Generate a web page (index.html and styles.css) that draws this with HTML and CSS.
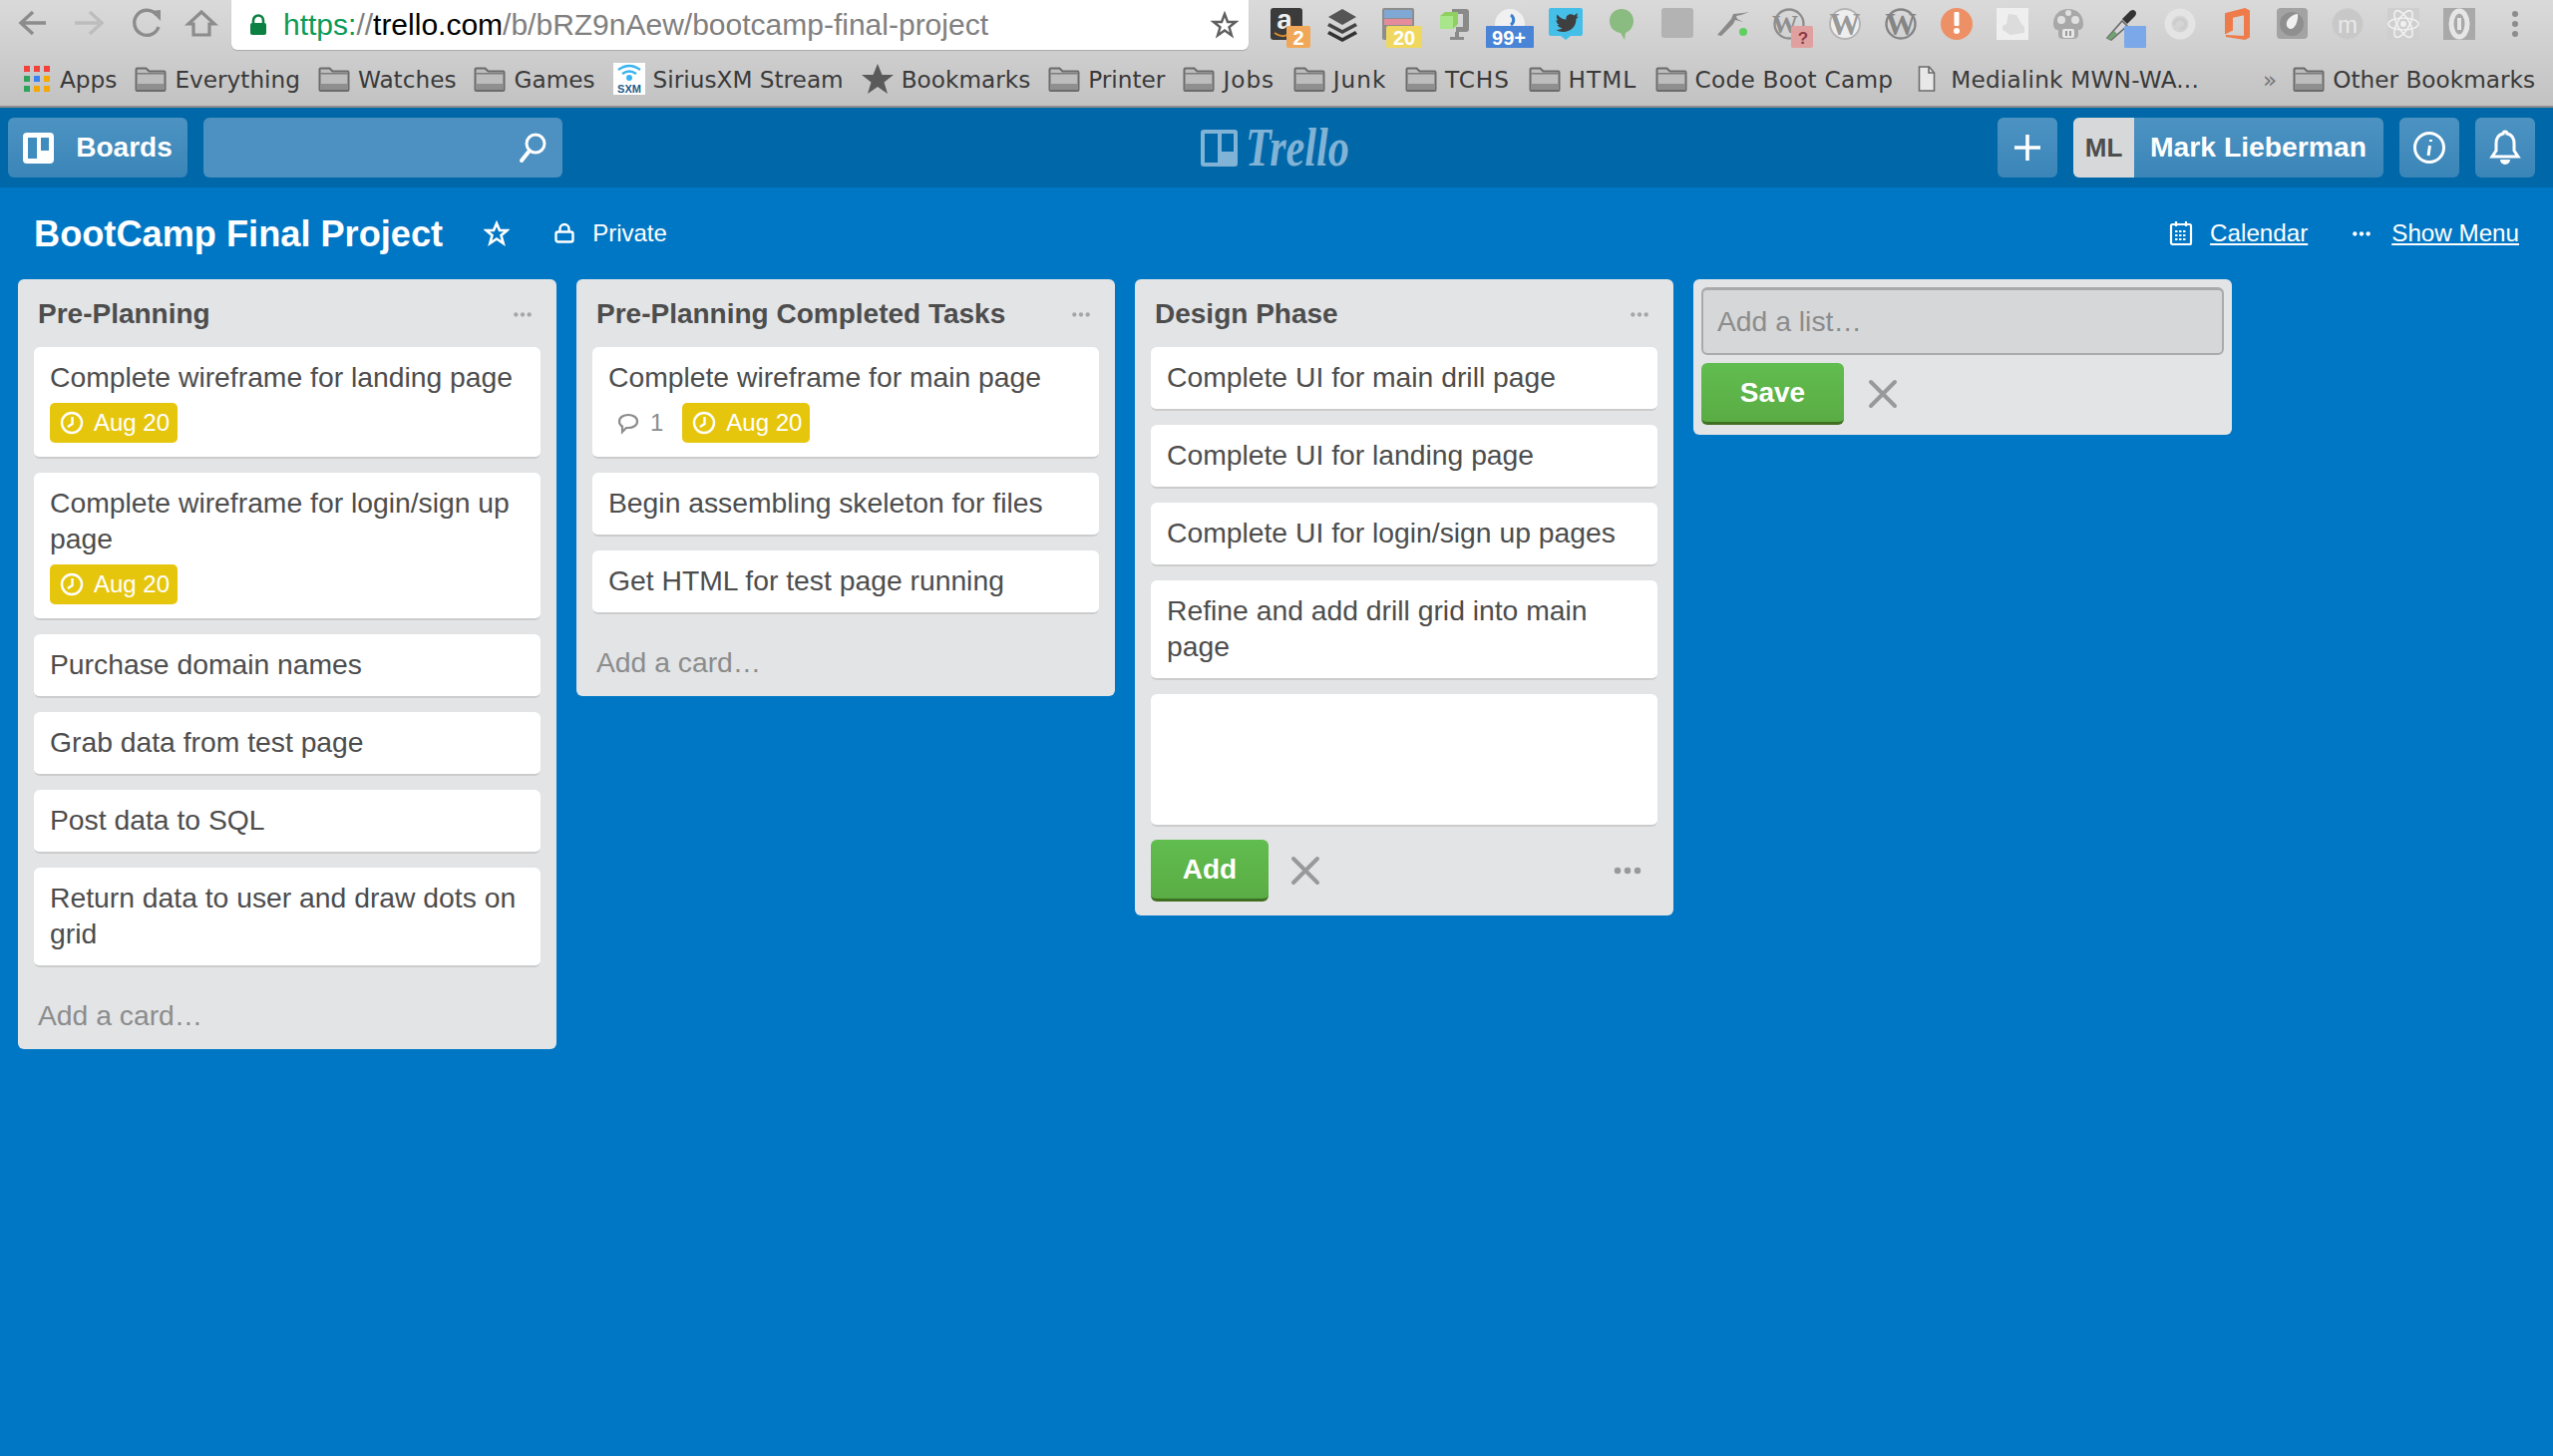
FILE: index.html
```html
<!DOCTYPE html>
<html>
 <head>
  <title>BootCamp Final Project on Trello</title>
  <link rel="stylesheet" href="styles.css">
 </head>
 <body>
  <svg class="defs" width="0" height="0">
   <symbol id="folder" viewBox="0 0 32 25">
    <path d="M1.5 23V2.5q0-1 1-1h9l3 3h15q1 0 1 1V23q0 1-1 1h-27q-1 0-1-1z" fill="#bdbdbd" stroke="#6b6b6b" stroke-width="2"/>
    <rect x="2.5" y="17" width="27" height="6" fill="#8f8f8f"/>
    <rect x="2.5" y="6" width="27" height="1.5" fill="#7d7d7d"/>
   </symbol>
   <symbol id="clock" viewBox="0 0 24 24">
    <circle cx="12" cy="12" r="10" fill="none" stroke="#fff" stroke-width="2.4"/>
    <path d="M12.5 6v7L8 16" fill="none" stroke="#fff" stroke-width="2.4"/>
   </symbol>
   <symbol id="dots" viewBox="0 0 24 8">
    <circle cx="4" cy="4" r="2.6"/><circle cx="12" cy="4" r="2.6"/><circle cx="20" cy="4" r="2.6"/>
   </symbol>
  </svg>

  <div class="chrome">
   <div class="toolbar">
    <div class="nav">
     <svg width="56" height="50" viewBox="0 0 56 50"><path d="M46 23H23M33 12L21 23l12 11" fill="none" stroke="#8c8c8c" stroke-width="3.4"/></svg>
     <svg width="56" height="50" viewBox="0 0 56 50"><path d="M19 23h24M34 12l12 11-12 11" fill="none" stroke="#bdbdbd" stroke-width="3.4"/></svg>
     <svg width="56" height="50" viewBox="-6 0 56 50"><path d="M39 15a12.500 12.500 0 1 0 2 12" fill="none" stroke="#8c8c8c" stroke-width="3.4"/><path d="M33 11l10-1v11z" fill="#8c8c8c"/></svg>
     <svg width="56" height="50" viewBox="-6 0 56 50"><path d="M15 24l13-12 13 12h-5v11H20V24z" fill="none" stroke="#8c8c8c" stroke-width="3.2"/></svg>
    </div>
    <div class="urlbar">
     <svg class="lock" width="18" height="22" viewBox="0 0 18 22"><path d="M4 10V6.500a5 5 0 0 1 10 0V10" fill="none" stroke="#0b8043" stroke-width="2.6"/><rect x="1" y="9" width="16" height="12" rx="2" fill="#0b8043"/></svg>
     <span class="url"><span class="url-scheme">https:</span><span class="url-path">//</span><span class="url-host">trello.com</span><span class="url-path">/b/bRZ9nAew/bootcamp-final-project</span></span>
     <svg class="url-star" width="28" height="28" viewBox="0 0 28 28"><path d="M14 3l3 8h8l-6.500 5.200 2.500 8.300-7-5-7 5 2.500-8.300L3 11h8z" fill="none" stroke="#5f5f5f" stroke-width="2.4"/></svg>
    </div>
    <div class="exts">
     <svg width="56" height="54" viewBox="0 0 56 54"><rect x="12" y="8" width="32" height="32" rx="3" fill="#3b3b3b"/><text x="26" y="29" text-anchor="middle" font-family="Liberation Sans" font-weight="700" font-size="28" fill="#eee">a</text><path d="M16 33q8 5 12 2" fill="none" stroke="#d98c2e" stroke-width="2"/><rect x="28" y="26" width="24" height="22" rx="2" fill="#f0a858"/><text x="40" y="45" text-anchor="middle" font-family="Liberation Sans" font-weight="700" font-size="20" fill="#fff">2</text></svg>
     <svg width="56" height="54" viewBox="0 0 56 54"><path d="M28 9l14 8-14 8-14-8z" fill="#555"/><path d="M15 23l13 7 13-7 2 3-15 8-15-8z" fill="#444"/><path d="M15 31l13 7 13-7 2 3-15 8-15-8z" fill="#333"/></svg>
     <svg width="56" height="54" viewBox="0 0 56 54"><rect x="12" y="8" width="32" height="32" rx="2" fill="#8d8d8d"/><rect x="14" y="10" width="28" height="8" fill="#7fa9d4"/><rect x="14" y="19" width="28" height="6" fill="#e58c9c"/><rect x="16" y="26" width="36" height="22" rx="2" fill="#f0d860"/><text x="34" y="45" text-anchor="middle" font-family="Liberation Sans" font-weight="700" font-size="20" fill="#fff">20</text></svg>
     <svg width="56" height="54" viewBox="0 0 56 54"><path d="M26 9h14q3 0 3 3v17q0 3-3 3H30v-5h7V14H26z" fill="#8a8a8a"/><rect x="29" y="32" width="4" height="8" fill="#8a8a8a"/><rect x="24" y="37" width="14" height="3" fill="#8a8a8a"/><path d="M14 16l5-4h13v12l-5 5H14z" fill="#8fd060"/><rect x="14" y="16" width="13" height="13" fill="#a9e58a"/></svg>
     <svg width="56" height="54" viewBox="0 0 56 54"><circle cx="28" cy="24" r="15" fill="#f0f0f0"/><path d="M29 15a6 6 0 0 1 0 10" fill="none" stroke="#3a7fcf" stroke-width="3"/><rect x="4" y="26" width="48" height="22" rx="1" fill="#4a84d6"/><text x="27" y="45" text-anchor="middle" font-family="Liberation Sans" font-weight="700" font-size="20" fill="#fff">99+</text></svg>
     <svg width="56" height="54" viewBox="0 0 56 54"><path d="M13 8h30q2 0 2 2v24q0 2-2 2H33l-5 4-5-4H13q-2 0-2-2V10q0-2 2-2z" fill="#45bfe8"/><path d="M37 15l3-2-1 4 2-.5-2.500 2.500c0 8-6 13-13 13-3 0-5-1-7-2 3 0 5-1 6-2-3 0-4-2-5-3h2c-2-1-3-3-3-5l2 .5c-2-2-2-4-1-6 2 3 6 5 9 5-1-4 4-7 8-4z" fill="#3f3f3f"/></svg>
     <svg width="56" height="54" viewBox="0 0 56 54"><path d="M28 9c7 0 12 5 12 12 0 5-3 10-8 12l-1 7-4-7c-7-1-11-6-11-12 0-7 5-12 12-12z" fill="#8abb80"/></svg>
     <svg width="56" height="54" viewBox="0 0 56 54"><rect x="12" y="8" width="32" height="30" rx="3" fill="#b3b3b3"/></svg>
     <svg width="56" height="54" viewBox="0 0 56 54"><path d="M12 35l14-16 2-5 10-1 6-1-8 3-5 1 1 3 6 3-8-2-2 4-12 12z" fill="#8a8a8a"/><circle cx="38" cy="32" r="4" fill="#5fd05f"/></svg>
     <svg width="56" height="54" viewBox="0 0 56 54"><circle cx="28" cy="24" r="14.500" fill="none" stroke="#8e8e8e" stroke-width="2.400"/><text x="24" y="33" text-anchor="middle" font-family="Liberation Serif" font-weight="700" font-size="26" fill="#8e8e8e">W</text><rect x="30" y="26" width="22" height="22" rx="2" fill="#e0a0a0"/><text x="42" y="44" text-anchor="middle" font-family="Liberation Sans" font-weight="700" font-size="17" fill="#8c3b45">?</text></svg>
     <svg width="56" height="54" viewBox="0 0 56 54"><circle cx="28" cy="24" r="15" fill="#eee" stroke="#b5b5b5" stroke-width="2"/><text x="28" y="35" text-anchor="middle" font-family="Liberation Serif" font-weight="700" font-size="31" fill="#999">W</text></svg>
     <svg width="56" height="54" viewBox="0 0 56 54"><circle cx="28" cy="24" r="14.500" fill="none" stroke="#858585" stroke-width="2.400"/><text x="28" y="35" text-anchor="middle" font-family="Liberation Serif" font-weight="700" font-size="31" fill="#858585">W</text></svg>
     <svg width="56" height="54" viewBox="0 0 56 54"><circle cx="28" cy="24" r="16" fill="#ee9066"/><rect x="25.500" y="12" width="5" height="14" rx="1" fill="#fff"/><circle cx="28" cy="31" r="3" fill="#fff"/></svg>
     <svg width="56" height="54" viewBox="0 0 56 54"><rect x="12" y="8" width="32" height="32" fill="#efefef"/><path d="M18 26l4-2 2-10 8 1 5 9 3 3v6l-14 2-8-5z" fill="#dcdcdc"/></svg>
     <svg width="56" height="54" viewBox="0 0 56 54"><path d="M13 24c0-10 7-15 15-15s15 5 15 15c0 4-2 6-5 6v5c0 3-3 4-5 4H23c-3 0-5-1-5-4v-5c-3 0-5-2-5-6z" fill="#a8a8a8"/><circle cx="21" cy="20" r="4" fill="#e0e0e0"/><circle cx="35" cy="20" r="4" fill="#e0e0e0"/><circle cx="28" cy="13" r="3" fill="#e0e0e0"/><rect x="22" y="29" width="12" height="9" rx="2" fill="#e6e6e6"/><rect x="25" y="31" width="2" height="5" fill="#999"/><rect x="29" y="31" width="2" height="5" fill="#999"/></svg>
     <svg width="56" height="54" viewBox="0 0 56 54"><path d="M11 38l15-17 5 5-16 14z" fill="#d7d7d7" stroke="#6a6a6a" stroke-width="1.600"/><path d="M11 38l7-7 3 3-7 6z" fill="#6fa36f"/><path d="M26 19l8-8q3-2 5 0t0 5l-8 8z" fill="#333"/><rect x="28" y="26" width="22" height="22" rx="1" fill="#7aa8e8"/></svg>
     <svg width="56" height="54" viewBox="0 0 56 54"><circle cx="28" cy="24" r="12" fill="none" stroke="#e4e4e4" stroke-width="7"/><path d="M22 25c0-6 8-8 11-3 2 4-2 7-5 6" fill="none" stroke="#cdcdcd" stroke-width="3"/></svg>
     <svg width="56" height="54" viewBox="0 0 56 54"><path d="M18 14l19-5 4 2v26l-4 2-19-3 19 1V14l-13 3v13l-6 3z" fill="#ee7c4a" stroke="#ee7c4a" stroke-width="2"/></svg>
     <svg width="56" height="54" viewBox="0 0 56 54"><rect x="13" y="8" width="31" height="31" rx="4" fill="#a3a3a3"/><circle cx="28" cy="24" r="12" fill="#8f8f8f"/><path d="M23 26c-2-6 6-12 11-12 1 7-3 15-7 15-2 0-3-1-4-3z" fill="#f0f0f0"/></svg>
     <svg width="56" height="54" viewBox="0 0 56 54"><circle cx="28" cy="24" r="15.500" fill="#c8c8c8" stroke="#cfcfcf"/><text x="28" y="33" text-anchor="middle" font-family="Liberation Sans" font-size="24" fill="#e8e8e8">m</text></svg>
     <svg width="56" height="54" viewBox="0 0 56 54"><rect x="12" y="8" width="32" height="32" fill="#cfcfcf"/><g fill="none" stroke="#f0f0f0" stroke-width="1.600"><ellipse cx="28" cy="24" rx="15" ry="6"/><ellipse cx="28" cy="24" rx="15" ry="6" transform="rotate(60 28 24)"/><ellipse cx="28" cy="24" rx="15" ry="6" transform="rotate(120 28 24)"/></g><circle cx="28" cy="24" r="3" fill="#f0f0f0"/></svg>
     <svg width="56" height="54" viewBox="0 0 56 54"><rect x="12" y="8" width="32" height="32" fill="#a9a9a9"/><ellipse cx="28" cy="24" rx="8" ry="13" fill="none" stroke="#e6e6e6" stroke-width="5"/><rect x="26" y="18" width="4" height="12" fill="#e6e6e6"/></svg>
     <svg width="56" height="54" viewBox="0 0 56 54" fill="#8c8c8c"><circle cx="28" cy="14" r="3"/><circle cx="28" cy="24" r="3"/><circle cx="28" cy="34" r="3"/></svg>
    </div>
   </div>
   <div class="bookmarks">
    <div class="bm">
     <svg width="28" height="26" viewBox="0 0 28 26"><g fill="#f4413b"><rect width="6" height="6"/><rect x="10" width="6" height="6"/><rect x="20" width="6" height="6"/></g><rect y="10" width="6" height="6" fill="#2fa35a"/><rect x="10" y="10" width="6" height="6" fill="#3b84ef"/><rect x="20" y="10" width="6" height="6" fill="#f5a800"/><rect y="20" width="6" height="6" fill="#2fa35a"/><rect x="10" y="20" width="6" height="6" fill="#f5a800"/><rect x="20" y="20" width="6" height="6" fill="#f5a800"/></svg>
     <span>Apps</span>
    </div>
    <div class="bm"><svg width="32" height="25"><use href="#folder"/></svg><span>Everything</span></div>
    <div class="bm"><svg width="32" height="25"><use href="#folder"/></svg><span>Watches</span></div>
    <div class="bm"><svg width="32" height="25"><use href="#folder"/></svg><span>Games</span></div>
    <div class="bm">
     <svg width="32" height="32" viewBox="0 0 32 32"><rect width="32" height="32" fill="#fff"/><g fill="none" stroke="#39b4f0" stroke-width="2.400"><path d="M5 7q11-8 22 0"/><path d="M9 11q7-5 14 0"/></g><circle cx="16" cy="15" r="3" fill="#39b4f0"/><text x="16" y="30" text-anchor="middle" font-family="Liberation Sans" font-weight="700" font-size="11" fill="#1c5c8c">SXM</text></svg>
     <span>SiriusXM Stream</span>
    </div>
    <div class="bm">
     <svg width="32" height="32" viewBox="0 0 32 32"><path d="M16 1l4.500 11H32l-9.500 7.500L26 31l-10-7-10 7 3.500-11.500L0 12h11.500z" fill="#5a5a5a"/></svg>
     <span>Bookmarks</span>
    </div>
    <div class="bm"><svg width="32" height="25"><use href="#folder"/></svg><span>Printer</span></div>
    <div class="bm bm-wide"><svg width="32" height="25"><use href="#folder"/></svg><span>Jobs</span></div>
    <div class="bm bm-wide"><svg width="32" height="25"><use href="#folder"/></svg><span>Junk</span></div>
    <div class="bm bm-wide"><svg width="32" height="25"><use href="#folder"/></svg><span>TCHS</span></div>
    <div class="bm bm-wide"><svg width="32" height="25"><use href="#folder"/></svg><span>HTML</span></div>
    <div class="bm bm-code"><svg width="32" height="25"><use href="#folder"/></svg><span>Code Boot Camp</span></div>
    <div class="bm bm-doc">
     <svg width="18" height="26" viewBox="0 0 18 26"><path d="M1.500 1h10l5 6v18h-15z" fill="#e8e8e8" stroke="#6b6b6b" stroke-width="1.600"/><path d="M11 1v6h5.500" fill="none" stroke="#6b6b6b" stroke-width="1.600"/></svg>
     <span>Medialink MWN-WA...</span>
    </div>
    <div class="bm-right">
     <span class="bm-more">»</span>
     <div class="bm"><svg width="32" height="25"><use href="#folder"/></svg><span>Other Bookmarks</span></div>
    </div>
   </div>
  </div>

  <header class="topbar">
   <div class="topbar-left">
    <a class="hbtn boards-btn">
     <svg width="31" height="31" viewBox="0 0 31 31"><rect width="31" height="31" rx="4" fill="#fff"/><rect x="5" y="5" width="9" height="21" fill="#3f8dbf"/><rect x="18" y="5" width="8" height="13" fill="#3f8dbf"/></svg>
     <span>Boards</span>
    </a>
    <div class="hbtn search">
     <svg width="32" height="32" viewBox="0 0 32 32"><circle cx="19" cy="12" r="9" fill="none" stroke="#fff" stroke-width="3"/><path d="M13 19L5 29" stroke="#fff" stroke-width="4" stroke-linecap="round"/></svg>
    </div>
   </div>
   <div class="logo">
    <svg width="37" height="37" viewBox="0 0 37 37"><rect width="37" height="37" rx="3" fill="#80b3d5"/><rect x="4" y="4" width="13" height="29" fill="#0067a8"/><rect x="21" y="4" width="12" height="18" fill="#0067a8"/></svg>
    <span class="logo-word">Trello</span>
   </div>
   <div class="topbar-right">
    <a class="hbtn icon-btn"><svg width="30" height="30" viewBox="0 0 30 30"><path d="M15 2v26M2 15h26" stroke="#fff" stroke-width="3.600"/></svg></a>
    <a class="hbtn user-btn"><span class="avatar">ML</span><span class="user-name">Mark Lieberman</span></a>
    <a class="hbtn icon-btn"><svg width="34" height="34" viewBox="0 0 34 34"><circle cx="17" cy="17" r="14.500" fill="none" stroke="#fff" stroke-width="3"/><path d="M18.500 9v2M17.500 15l-1.500 10" stroke="#fff" stroke-width="3"/></svg></a>
    <a class="hbtn icon-btn"><svg width="34" height="36" viewBox="0 0 34 36"><path d="M17 2c1.500 0 2 1 2 2 5 1 7 5 7 10v7l4 6H4l4-6v-7c0-5 2-9 7-10 0-1 .5-2 2-2z" fill="none" stroke="#fff" stroke-width="3"/><path d="M12 30a5 5 0 0 0 10 0z" fill="#fff"/></svg></a>
   </div>
  </header>

  <div class="board-head">
   <h1>BootCamp Final Project</h1>
   <svg class="head-star" width="26" height="26" viewBox="0 0 26 26"><path d="M13 3l3 7h7.500l-6 5 2.200 8L13 18.500 6.300 23l2.200-8-6-5H10z" fill="none" stroke="#fff" stroke-width="2.600"/></svg>
   <div class="private">
    <svg width="20" height="22" viewBox="0 0 20 22"><path d="M5.500 10V6.500a4.500 4.500 0 0 1 9 0V10" fill="none" stroke="#fff" stroke-width="2.400"/><rect x="1.500" y="9.500" width="17" height="10" rx="2" fill="none" stroke="#fff" stroke-width="2.400"/></svg>
    <span>Private</span>
   </div>
   <div class="head-links">
    <svg width="24" height="26" viewBox="0 0 24 26"><rect x="2" y="4" width="20" height="20" rx="1.500" fill="none" stroke="#fff" stroke-width="2.200"/><path d="M7 1v5M17 1v5" stroke="#fff" stroke-width="2.200"/><path d="M6 11h12M6 15h12M6 19h12" stroke="#fff" stroke-width="2" stroke-dasharray="2.500 1.500"/></svg>
    <a class="calendar-link">Calendar</a>
    <svg class="menu-dots" width="20" height="7" fill="#fff"><use href="#dots"/></svg>
    <a>Show Menu</a>
   </div>
  </div>

  <main class="lists">
   <section class="list">
    <div class="list-head"><h2>Pre-Planning</h2><svg width="20" height="7" fill="#a6a6a6"><use href="#dots"/></svg></div>
    <div class="card has-badges">Complete wireframe for landing page
     <div class="badges"><span class="due"><svg width="24" height="24"><use href="#clock"/></svg>Aug 20</span></div>
    </div>
    <div class="card has-badges">Complete wireframe for login/sign up page
     <div class="badges"><span class="due"><svg width="24" height="24"><use href="#clock"/></svg>Aug 20</span></div>
    </div>
    <div class="card">Purchase domain names</div>
    <div class="card">Grab data from test page</div>
    <div class="card">Post data to SQL</div>
    <div class="card">Return data to user and draw dots on grid</div>
    <div class="add-card">Add a card…</div>
   </section>

   <section class="list">
    <div class="list-head"><h2>Pre-Planning Completed Tasks</h2><svg width="20" height="7" fill="#a6a6a6"><use href="#dots"/></svg></div>
    <div class="card has-badges">Complete wireframe for main page
     <div class="badges">
      <span class="comments"><svg width="24" height="24" viewBox="0 0 24 24"><path d="M12 4c5 0 9 2.500 9 6.500S17 17 12 17h-2l-4 4v-5.500c-2-1-3-3-3-5C3 6.500 7 4 12 4z" fill="none" stroke="#8c8c8c" stroke-width="2.200"/></svg>1</span>
      <span class="due"><svg width="24" height="24"><use href="#clock"/></svg>Aug 20</span>
     </div>
    </div>
    <div class="card">Begin assembling skeleton for files</div>
    <div class="card">Get HTML for test page running</div>
    <div class="add-card">Add a card…</div>
   </section>

   <section class="list">
    <div class="list-head"><h2>Design Phase</h2><svg width="20" height="7" fill="#a6a6a6"><use href="#dots"/></svg></div>
    <div class="card">Complete UI for main drill page</div>
    <div class="card">Complete UI for landing page</div>
    <div class="card">Complete UI for login/sign up pages</div>
    <div class="card">Refine and add drill grid into main page</div>
    <div class="card card-new"></div>
    <div class="composer-controls">
     <button class="btn-green btn-add">Add</button>
     <svg class="cancel" width="30" height="30" viewBox="0 0 30 30"><path d="M3 3l24 24M27 3L3 27" stroke="#999" stroke-width="4" stroke-linecap="round"/></svg>
     <svg class="composer-more" width="32" height="10" viewBox="0 0 24 8" fill="#999"><use href="#dots"/></svg>
    </div>
   </section>

   <section class="list add-list">
    <input class="list-name" type="text" placeholder="Add a list…">
    <div class="add-list-controls">
     <button class="btn-green btn-save">Save</button>
     <svg class="cancel" width="30" height="30" viewBox="0 0 30 30"><path d="M3 3l24 24M27 3L3 27" stroke="#999" stroke-width="4" stroke-linecap="round"/></svg>
    </div>
   </section>
  </main>
 </body>
</html>
```

FILE: styles.css
```css
* {
    box-sizing: border-box;
}

body {
    margin: 0;
    min-height: 100vh;
    background-color: #0077c5;
    font-family: 'Liberation Sans', Arial, sans-serif;
    font-size: 28.3px;
    color: #4d4d4d;
}

svg {
    display: block;
    flex: none;
}

.defs {
    position: absolute;
}

/* browser chrome */
.chrome {
    height: 108px;
    background: linear-gradient(#dadada, #c2c2c2);
    border-bottom: 2px solid #8e8e8e;
}

.toolbar {
    display: flex;
    height: 54px;
}

.nav {
    display: flex;
    width: 232px;
}

.urlbar {
    display: flex;
    align-items: center;
    width: 1020px;
    height: 50px;
    padding: 0 10px 0 18px;
    background: #fff;
    border-radius: 0 0 6px 6px;
    box-shadow: 0 1px 1px #aaa;
}

.url {
    margin-left: 16px;
    font-size: 30px;
    color: #808080;
    white-space: nowrap;
}

.url-scheme {
    color: #0b9a58;
}

.url-host {
    color: #000;
}

.url-star {
    margin-left: auto;
}

.exts {
    display: flex;
    margin-left: 10px;
}

.bookmarks {
    display: flex;
    align-items: center;
    height: 52px;
    padding: 0 18px 2px 24px;
    font-family: 'DejaVu Sans', sans-serif;
    font-size: 23.2px;
    color: #3a3a3a;
}

.bm {
    display: flex;
    align-items: center;
    gap: 8px;
    margin-right: 18px;
    white-space: nowrap;
}

.bm-wide {
    margin-right: 18.5px;
    letter-spacing: 1px;
}

.bm-code {
    letter-spacing: .25px;
}

.bm-doc {
    margin-left: 7px;
    gap: 15px;
    letter-spacing: .2px;
}

.bm-right {
    display: flex;
    align-items: center;
    margin-left: auto;
}

.bm-right .bm {
    margin-right: 0;
}

.bm-more {
    margin-right: 16px;
    color: #777;
}

/* trello header */
.topbar {
    position: relative;
    display: flex;
    justify-content: space-between;
    height: 80px;
    padding: 10px 18px 10px 8px;
    background-color: #0067a8;
}

.topbar-left,
.topbar-right {
    display: flex;
    gap: 16px;
}

.hbtn {
    display: flex;
    align-items: center;
    justify-content: center;
    height: 60px;
    border-radius: 6px;
    background: linear-gradient(#4c93c2, #3a85b8);
    color: #fff;
    font-weight: 700;
}

.boards-btn {
    gap: 22px;
    width: 180px;
    font-size: 28px;
}

.search {
    justify-content: flex-end;
    width: 360px;
    padding-right: 14px;
    background: #4c91c1;
}

.logo {
    position: absolute;
    left: 1204px;
    top: 16px;
    display: flex;
    align-items: center;
    gap: 8px;
    color: #80b3d5;
}

.logo-word {
    display: block;
    font-family: 'Liberation Serif', serif;
    font-style: italic;
    font-weight: 700;
    font-size: 54px;
    line-height: 48px;
    transform: scaleX(.78);
    transform-origin: left center;
}

.icon-btn {
    width: 60px;
}

.user-btn {
    width: 311px;
    justify-content: flex-start;
    overflow: hidden;
}

.avatar {
    display: flex;
    align-items: center;
    justify-content: center;
    width: 61px;
    height: 60px;
    background: #d6d8da;
    color: #4d4d4d;
    font-size: 26px;
}

.user-name {
    margin-left: 16px;
    margin-top: -2px;
    white-space: nowrap;
}

/* board title row */
.board-head {
    display: flex;
    align-items: center;
    height: 92px;
    padding: 0 34px;
    color: #fff;
}

h1 {
    margin: 2px 0 0;
    font-size: 36.2px;
}

.head-star {
    margin-left: 41px;
}

.private {
    display: flex;
    align-items: center;
    gap: 18px;
    margin-left: 45px;
    font-size: 24px;
}

.head-links {
    display: flex;
    align-items: center;
    margin-left: auto;
    font-size: 24.2px;
    text-decoration: underline;
}

.calendar-link {
    margin-left: 17px;
}

.menu-dots {
    margin: 0 20px 0 44px;
}

/* lists */
.lists {
    display: flex;
    align-items: flex-start;
    gap: 20px;
    padding-left: 18px;
}

.list {
    width: 540px;
    padding: 0 16px;
    background: #e2e4e6;
    border-radius: 6px;
}

.list-head {
    display: flex;
    align-items: center;
    justify-content: space-between;
    height: 68px;
    padding: 2px 8px 0 4px;
}

h2 {
    margin: 0;
    font-size: 28px;
    line-height: 36px;
}

.card {
    margin-bottom: 14px;
    padding: 12px 16px 14px;
    background: #fff;
    border-bottom: 2px solid #ccc;
    border-radius: 6px;
    line-height: 36px;
}

.card-new {
    height: 133px;
    margin-bottom: 13px;
}

.badges {
    display: flex;
    margin-top: 8px;
}

.due {
    display: flex;
    align-items: center;
    gap: 10px;
    width: 128px;
    height: 40px;
    padding-left: 10px;
    background: #e6c60d;
    border-radius: 5px;
    color: #fff;
    font-size: 24px;
}

.comments {
    display: flex;
    align-items: center;
    gap: 10px;
    margin: 0 19px 0 8px;
    color: #8c8c8c;
    font-size: 24px;
}

.add-card {
    display: flex;
    align-items: center;
    height: 68px;
    padding-left: 4px;
    color: #8c8c8c;
}

.composer-controls,
.add-list-controls {
    display: flex;
    align-items: center;
}

.composer-controls {
    padding-bottom: 14px;
}

.btn-green {
    height: 62px;
    border: 0;
    border-bottom: 3px solid #3f6f21;
    border-radius: 6px;
    background: linear-gradient(#61bd4f, #5aac44);
    color: #fff;
    font-family: inherit;
    font-size: 28px;
    font-weight: 700;
}

.btn-add {
    width: 118px;
}

.cancel {
    margin-left: 22px;
}

.add-list .cancel {
    margin-left: 24px;
}

.composer-more {
    margin: 0 14px 0 auto;
}

.add-list {
    height: 156px;
    padding: 8px;
}

.list-name {
    display: block;
    width: 524px;
    height: 68px;
    padding: 0 14px;
    border: 2px solid #aaa;
    border-top-width: 3px;
    border-radius: 6px;
    background: #d6d7d9;
    font-family: inherit;
    font-size: 28.3px;
}

.list-name::placeholder {
    color: #8c8c8c;
    opacity: 1;
}

.add-list-controls {
    margin-top: 8px;
}

.btn-save {
    width: 143px;
}
```
